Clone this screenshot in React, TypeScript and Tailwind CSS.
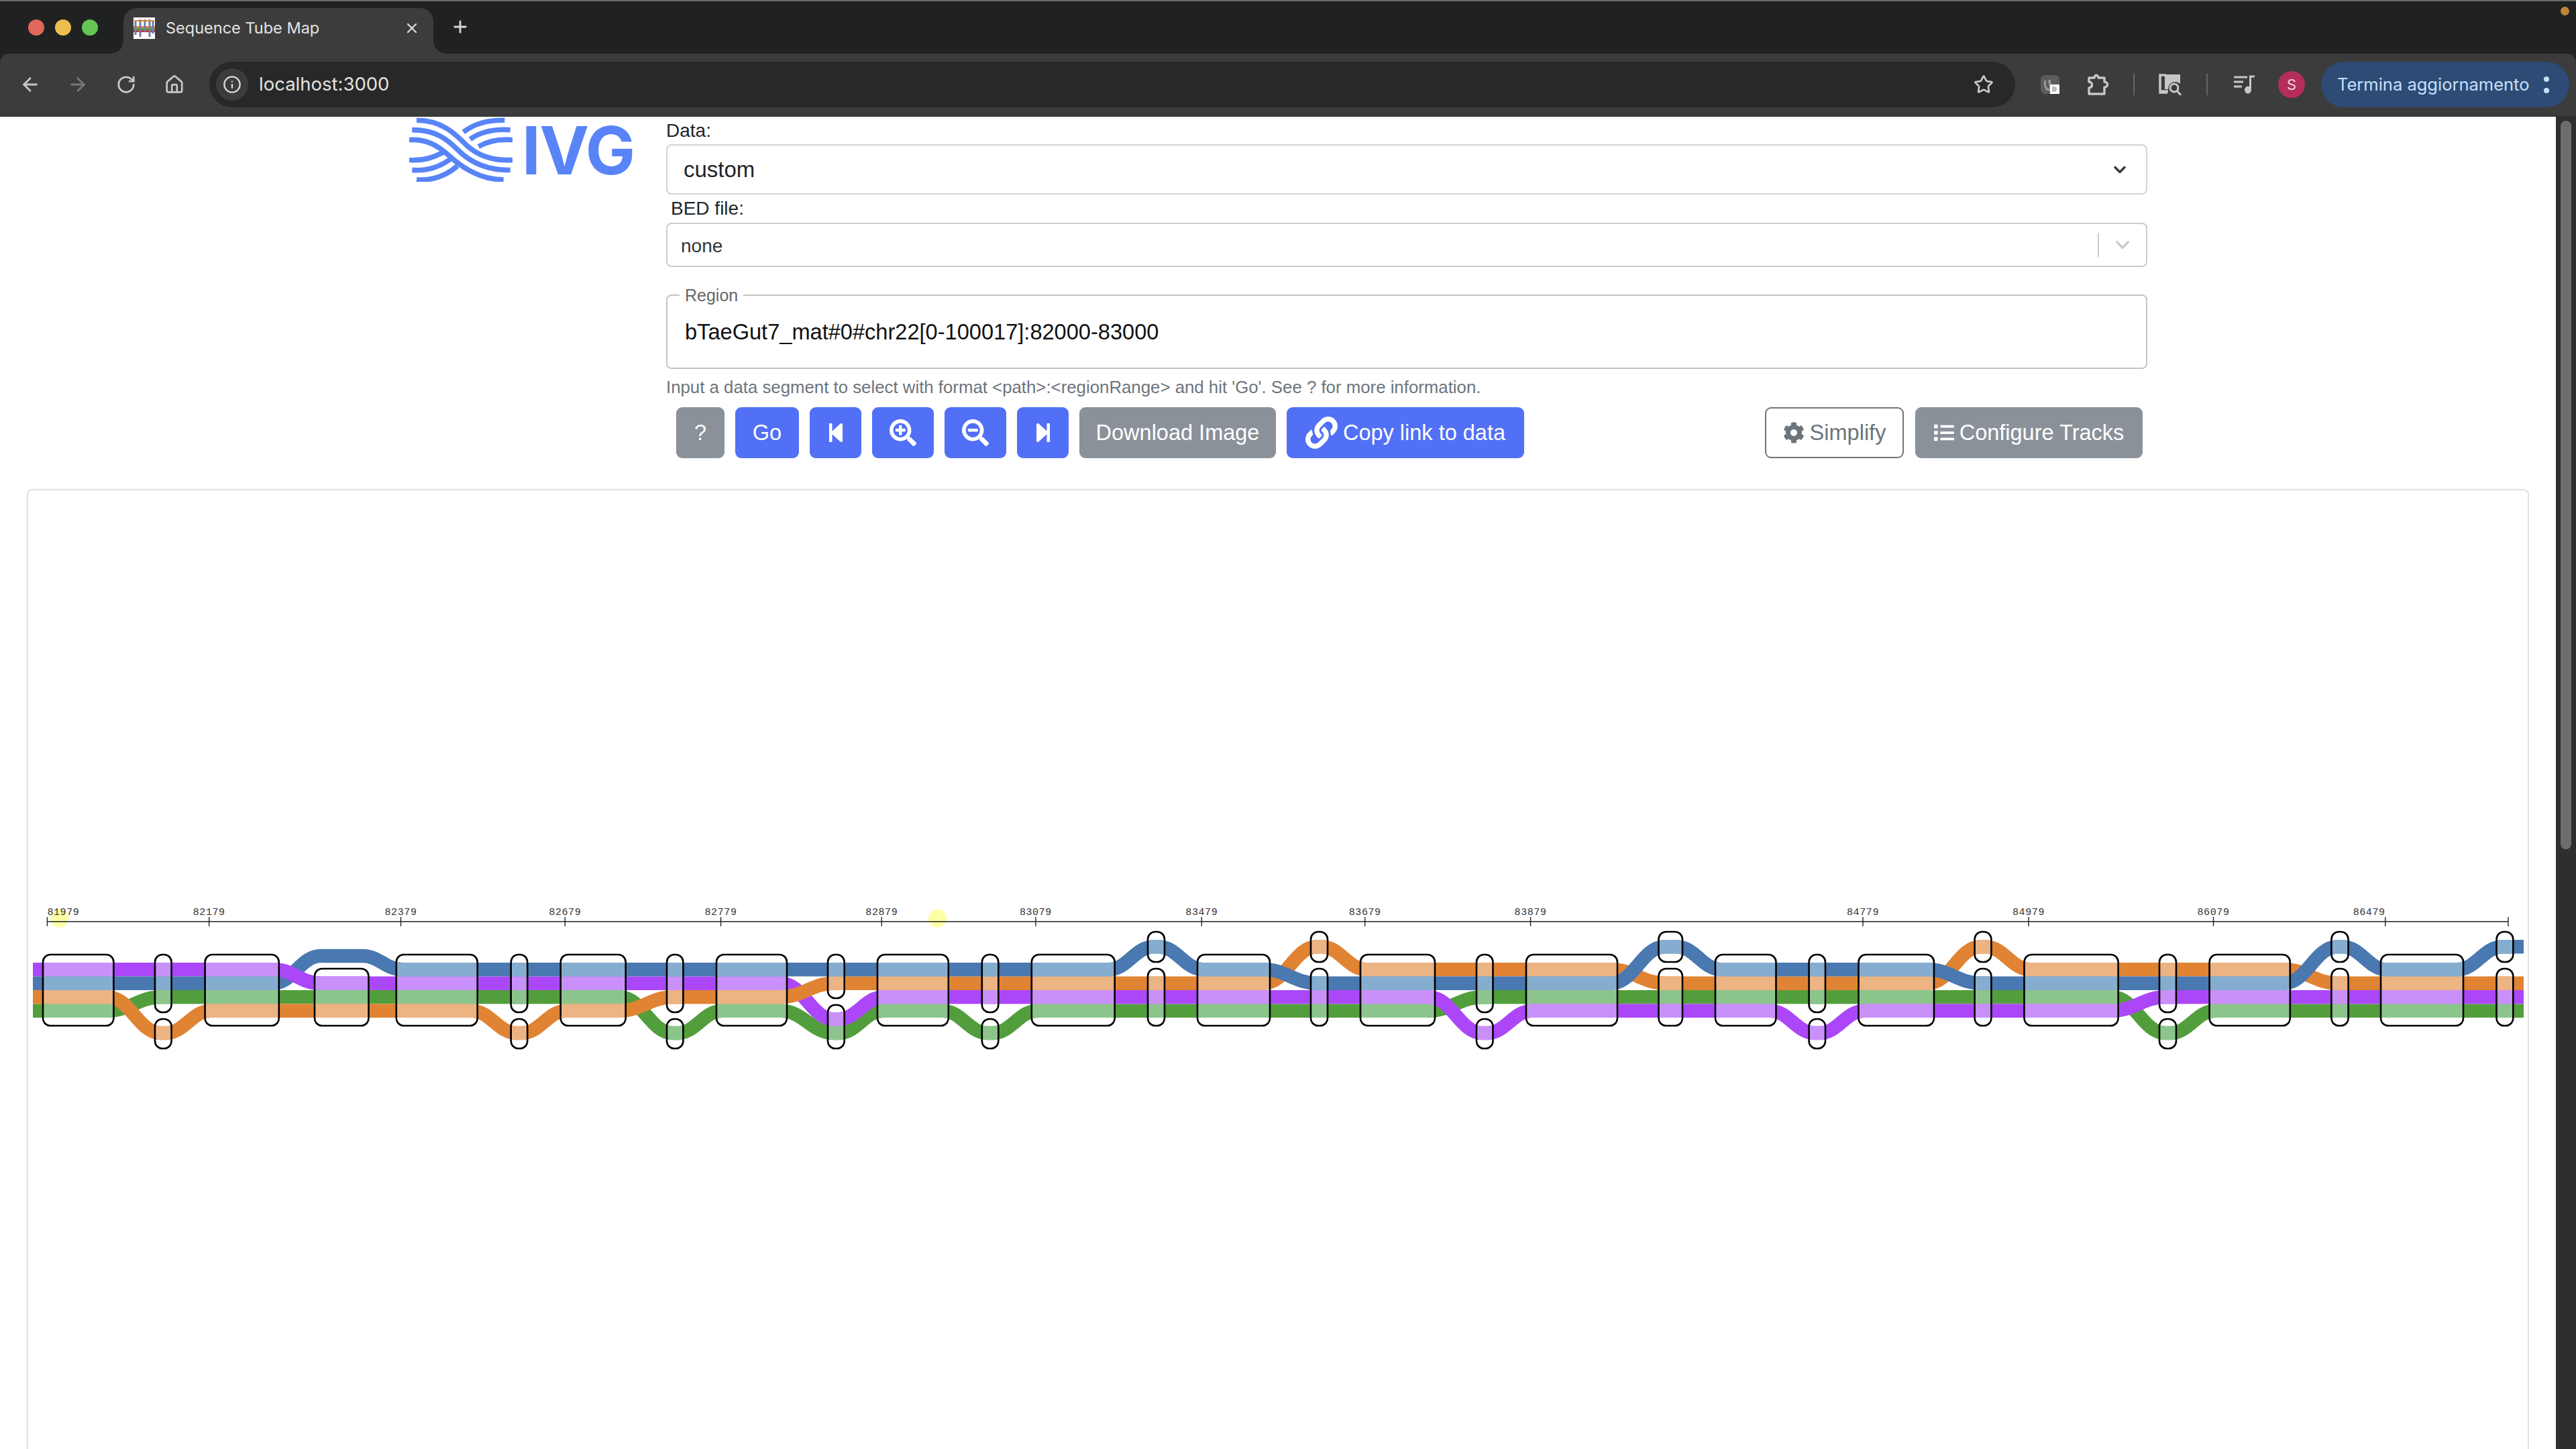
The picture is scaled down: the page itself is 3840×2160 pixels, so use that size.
import { ArrowLeft, ArrowRight, RotateCw, Home, Info, Star, X, Plus, ChevronDown } from "lucide-react";
import { FaStepBackward, FaStepForward, FaSearchPlus, FaSearchMinus, FaLink, FaCog, FaList } from "react-icons/fa";

const COLORS: Record<string, [string, string]> = {
  P: ["#AB47F8", "#C990F9"],
  B: ["#4A78B0", "#85ADD0"],
  O: ["#E08333", "#ECB383"],
  G: ["#539E3C", "#8BC58B"],
};

const LANES: Record<string, number> = { U: 1412.3, A: 1426, "0": 1446.25, "1": 1466.75, "2": 1487.25, "3": 1507.75, E: 1520.3, D: 1541 };

const PARTS: Record<string, [number, number][]> = {
  F: [[1424, 1530]],
  L: [[1445, 1530]],
  M: [[1424, 1510], [1520, 1564]],
  T: [[1390, 1435], [1445, 1530]],
  S: [[1424, 1489], [1499, 1564]],
};

// x range, shape of the node, lanes of purple / blue / orange / green
const NODES: [number, number, string, string][] = [
  [64, 169.4, "F", "0123"],
  [231, 255.6, "M", "01D2"],
  [305.6, 415.8, "F", "0132"],
  [469, 549.5, "L", "1A32"],
  [590.8, 711.7, "F", "1032"],
  [761.7, 786.2, "M", "10D2"],
  [835.7, 932.7, "F", "1032"],
  [994, 1018.4, "M", "102D"],
  [1068, 1173, "F", "1023"],
  [1234, 1258.7, "S", "E01D"],
  [1308, 1413.8, "F", "2013"],
  [1463.8, 1488.3, "M", "201D"],
  [1537.8, 1661.7, "F", "2013"],
  [1711, 1736, "T", "2U13"],
  [1785, 1893, "F", "2013"],
  [1954, 1979, "T", "21U3"],
  [2028, 2139, "F", "2103"],
  [2201, 2225.5, "M", "D102"],
  [2275, 2411, "F", "3102"],
  [2472.5, 2508, "T", "3U12"],
  [2557, 2647.5, "F", "3012"],
  [2696.6, 2721, "M", "D012"],
  [2770.5, 2883, "F", "3012"],
  [2943.6, 2968.4, "T", "31U2"],
  [3017.5, 3157.6, "F", "3102"],
  [3219, 3244, "M", "210D"],
  [3293.6, 3413.8, "F", "2103"],
  [3475.4, 3500.6, "T", "2U13"],
  [3549, 3672, "F", "2013"],
  [3721.5, 3746.3, "T", "2U13"],
];

const TICKS: [number, string, "start" | "middle" | "end"][] = [
  [70.4, "81979", "start"],
  [311.7, "82179", "middle"],
  [597.5, "82379", "middle"],
  [842.3, "82679", "middle"],
  [1074.5, "82779", "middle"],
  [1314.3, "82879", "middle"],
  [1543.9, "83079", "middle"],
  [1791.3, "83479", "middle"],
  [2034.7, "83679", "middle"],
  [2281.6, "83879", "middle"],
  [2777, "84779", "middle"],
  [3024, "84979", "middle"],
  [3299.5, "86079", "middle"],
  [3555.7, "86479", "end"],
  [3739, "", "middle"],
];

// curves start a little inside the nodes, that's how the real tubes bend
const BEND = 9;

function trackPath(index: number) {
  const laneY = (n: number) => LANES[NODES[n][3][index]];
  let d = `M49 ${laneY(0)} L${NODES[0][1] - BEND} ${laneY(0)}`;
  for (let i = 1; i < NODES.length; i++) {
    const x0 = NODES[i - 1][1] - BEND;
    const x1 = NODES[i][0] + BEND;
    const dx = x1 - x0;
    d += ` C${x0 + dx * 0.42} ${laneY(i - 1)} ${x1 - dx * 0.42} ${laneY(i)} ${x1} ${laneY(i)} L${NODES[i][1] - BEND} ${laneY(i)}`;
  }
  return d + ` L3762 ${laneY(NODES.length - 1)}`;
}

const DRAW_ORDER: [string, number][] = [["G", 3], ["P", 0], ["O", 2], ["B", 1]];

function TubeMap() {
  return (
    <svg viewBox="42 1340 3726 240" className="block w-[3726px] h-[240px] mt-[608px]">
      <defs>
        <clipPath id="nodes">
          {NODES.flatMap((n, i) =>
            PARTS[n[2]].map((p, j) => <rect key={`${i}-${j}`} x={n[0]} y={p[0]} width={n[1] - n[0]} height={p[1] - p[0]} rx={11} />)
          )}
        </clipPath>
      </defs>
      <circle cx={88.5} cy={1370} r={13.5} fill="#FDFFA6" />
      <circle cx={1397.5} cy={1370} r={13.5} fill="#FDFFA6" />
      <line x1={70.4} x2={3739} y1={1374.7} y2={1374.7} stroke="#222" strokeWidth={1.6} />
      {TICKS.map(([x, label, anchor]) => (
        <g key={x}>
          <line x1={x} x2={x} y1={1368} y2={1381.7} stroke="#222" strokeWidth={1.4} />
          {label && (
            <text x={x} y={1364.5} textAnchor={anchor} fontFamily="Liberation Mono, monospace" fontSize={15} letterSpacing={0.6} fill="#333">
              {label}
            </text>
          )}
        </g>
      ))}
      {DRAW_ORDER.map(([c, i]) => (
        <path key={c} d={trackPath(i)} fill="none" stroke={COLORS[c][0]} strokeWidth={20.5} />
      ))}
      <path d="M406.8 1446.25 C440 1446.25 445 1466.75 478 1466.75" fill="none" stroke={COLORS.P[0]} strokeWidth={20.5} />
      <g clipPath="url(#nodes)">
        {DRAW_ORDER.map(([c, i]) => (
          <path key={c} d={trackPath(i)} fill="none" stroke={COLORS[c][1]} strokeWidth={20.5} />
        ))}
      </g>
      {NODES.flatMap((n, i) =>
        PARTS[n[2]].map((p, j) => (
          <rect key={`${i}-${j}`} x={n[0]} y={p[0]} width={n[1] - n[0]} height={p[1] - p[0]} rx={11} fill="none" stroke="#000" strokeWidth={2.6} />
        ))
      )}
    </svg>
  );
}

function Logo() {
  const strands = [
    "M125 57 C240 57 300 120 350 170 C400 215 470 240 555 235",
    "M105 100 C210 100 260 140 310 190 C365 245 440 282 545 280",
    "M92 145 C170 140 220 170 270 215 C330 270 410 325 515 323",
    "M335 110 C380 75 440 55 520 57",
    "M365 142 C410 110 470 95 545 100",
    "M403 175 C445 150 490 140 555 145",
    "M92 235 C150 240 200 225 245 200",
    "M105 280 C170 285 230 265 275 232",
    "M125 323 C190 330 260 305 308 262",
  ];
  return (
    <div className="flex items-start w-[383px] h-[100px]">
      <svg viewBox="92 45 463 287" className="w-[154px] h-[96px] mt-[1px]">
        {strands.map((d) => (
          <path key={d} d={d} fill="none" stroke="#5884F8" strokeWidth={23} />
        ))}
      </svg>
      <span className="ml-[14px] text-[99px] leading-[100px] font-bold tracking-[-1.5px] text-[#5884F8] font-['Inter',sans-serif]">IVG</span>
    </div>
  );
}

function Favicon() {
  return (
    <svg viewBox="0 0 32 32" className="w-[32px] h-[32px] bg-white">
      <rect x="0" y="13" width="32" height="3" fill="#e08333" />
      <rect x="0" y="16" width="32" height="3" fill="#539e3c" />
      <rect x="0" y="19" width="32" height="3" fill="#c33" />
      <path d="M3 4v22M10 3v26M17 3v18M24 3v26M29 4v20" stroke="#6c7fb0" strokeWidth="3" />
      <path d="M1 5h30" stroke="#e08333" strokeWidth="2" />
    </svg>
  );
}

function ExtensionIcon() {
  return (
    <div className="relative w-[28px] h-[28px] rounded-[7px] bg-[#5c5c5c]">
      <svg viewBox="0 0 28 28" className="w-[28px] h-[28px]">
        <path d="M7 8c-2 6 1 14 5 14s3-10 0-14M14 7c-2 5 1 13 5 13" fill="none" stroke="#9a9a9a" strokeWidth="3" />
      </svg>
      <div className="absolute right-0 bottom-0 w-[14px] h-[14px] bg-white flex items-center">
        <div className="w-[7px] h-[8px] ml-[3px] rounded-r-[4px] bg-[#bbb]" />
      </div>
    </div>
  );
}

function PuzzleIcon() {
  return (
    <svg viewBox="0 0 34 34" className="w-[34px] h-[34px]">
      <path d="M3 7 H11 C12 2 16 2 17 7 H26 V13 C32 13 32 21 26 21 V31 H3 V22 C9 22 9 13 3 13 Z" fill="none" stroke="#c7c7c7" strokeWidth="3.4" strokeLinejoin="round" />
    </svg>
  );
}

function DeviceSearchIcon() {
  return (
    <svg viewBox="0 0 36 32" className="w-[36px] h-[32px]">
      <path d="M11 2H2v26h11" fill="none" stroke="#c7c7c7" strokeWidth="3.5" />
      <path d="M9 1h23v14c-4-4-11-4-15 0-2 2-3 5-3 8H9z" fill="#c7c7c7" />
      <path d="M2 26h12" stroke="#c7c7c7" strokeWidth="3.5" />
      <circle cx="23" cy="21" r="6" fill="none" stroke="#c7c7c7" strokeWidth="3" />
      <path d="M27 25l6 7" stroke="#c7c7c7" strokeWidth="3" />
    </svg>
  );
}

function MediaIcon() {
  return (
    <svg viewBox="0 0 32 28" className="w-[32px] h-[28px]">
      <path d="M0 3h20M0 10h14M0 17h12" stroke="#c7c7c7" strokeWidth="3" />
      <path d="M23 2h8M24.5 2v19" stroke="#c7c7c7" strokeWidth="3" />
      <ellipse cx="21" cy="22" rx="5" ry="5.5" fill="#c7c7c7" />
    </svg>
  );
}

function BrowserChrome() {
  return (
    <div className="h-[174px] shrink-0 bg-[#202221] border-t-2 border-[#6a6a6a] font-['Inter',sans-serif] relative">
      <div className="h-[78px] flex items-end relative">
        <div className="flex gap-[16px] ml-[42px] mb-[27px] mr-[38px]">
          <div className="w-[24px] h-[24px] rounded-full bg-[#E2665C]" />
          <div className="w-[24px] h-[24px] rounded-full bg-[#EDBE4F]" />
          <div className="w-[24px] h-[24px] rounded-full bg-[#66C653]" />
        </div>
        <div className="relative w-[462px] h-[68px] rounded-t-[20px] bg-[#3c3c3c] flex items-center pl-[15px] pb-[8px]">
          <div className="absolute left-[-18px] bottom-0 w-[18px] h-[18px] bg-[radial-gradient(circle_at_0_0,transparent_17px,#3c3c3c_18px)]" />
          <div className="absolute right-[-18px] bottom-0 w-[18px] h-[18px] bg-[radial-gradient(circle_at_100%_0,transparent_17px,#3c3c3c_18px)]" />
          <Favicon />
          <span className="ml-[16px] w-[355px] text-[23.5px] text-[#e3e3e3] whitespace-nowrap">Sequence Tube Map</span>
          <X size={24} color="#d8d8d8" strokeWidth={2.4} />
        </div>
        <Plus size={28} color="#d8d8d8" strokeWidth={2.4} className="ml-[26px] mb-[26px]" />
        <div className="absolute right-[10px] top-[8px] w-[13px] h-[13px] rounded-full bg-[#C0853A]" />
      </div>
      <div className="h-[94px] bg-[#3c3c3c] rounded-t-[14px] border-b-2 border-[#343434] flex items-center">
        <ArrowLeft size={32} color="#c7c7c7" strokeWidth={2.2} className="ml-[29px]" />
        <ArrowRight size={32} color="#777" strokeWidth={2.2} className="ml-[39px]" />
        <RotateCw size={30} color="#c7c7c7" strokeWidth={2.2} className="ml-[41px]" />
        <Home size={30} color="#c7c7c7" strokeWidth={2.2} className="ml-[42px]" />
        <div className="ml-[37px] w-[2692px] h-[68px] rounded-full bg-[#282828] flex items-center pl-[10px]">
          <div className="w-[48px] h-[48px] rounded-full bg-[#3c3c3c] flex items-center justify-center">
            <Info size={28} color="#d8d8d8" strokeWidth={2} />
          </div>
          <span className="ml-[16px] flex-1 text-[27.5px] text-[#e3e3e3]">localhost:3000</span>
          <Star size={30} color="#c7c7c7" strokeWidth={2.2} className="mr-[32px]" />
        </div>
        <div className="ml-[38px]"><ExtensionIcon /></div>
        <div className="ml-[41px]"><PuzzleIcon /></div>
        <div className="ml-[35px] w-[2px] h-[32px] bg-[#666]" />
        <div className="ml-[36px]"><DeviceSearchIcon /></div>
        <div className="ml-[35px] w-[2px] h-[32px] bg-[#666]" />
        <div className="ml-[39px]"><MediaIcon /></div>
        <div className="ml-[34px] w-[40px] h-[40px] rounded-full bg-[#B42D5D] flex items-center justify-center text-[22px] text-[#f5d5df]">S</div>
        <div className="ml-[24px] w-[370px] h-[68px] rounded-full bg-[#2D4B75] flex items-center pl-[24px] text-[25.5px] text-[#C6E0FA]">
          <span className="w-[308px] whitespace-nowrap">Termina aggiornamento</span>
          <div className="flex flex-col gap-[9px]">
            <div className="w-[8px] h-[8px] rounded-full bg-[#C6E0FA]" />
            <div className="w-[8px] h-[8px] rounded-full bg-[#C6E0FA]" />
          </div>
        </div>
      </div>
    </div>
  );
}

function Btn({ w, color = "bg-[#5270F5] text-white", children }: { w: string; color?: string; children: React.ReactNode }) {
  return <div className={`${w} ${color} h-[76px] rounded-[9px] flex items-center justify-center text-[32.5px] whitespace-nowrap`}>{children}</div>;
}

function Controls() {
  return (
    <div className="w-[2208px] text-[#212529]">
      <div className="h-[41px] flex items-center text-[28px] pt-[1px]">Data:</div>
      <div className="h-[75px] border-2 border-[#ced4da] rounded-[8px] flex items-center justify-between pl-[24px] pr-[25px] text-[33px]">
        <span>custom</span>
        <ChevronDown size={28} color="#343a40" strokeWidth={3} />
      </div>
      <div className="h-[42px] flex items-center text-[28px] pl-[7px]">BED file:</div>
      <div className="h-[66px] border-2 border-[#ccc] rounded-[8px] flex items-center pl-[20px] text-[28px] text-[#333]">
        <span className="flex-1 pt-[3px]">none</span>
        <div className="w-[2px] h-[36px] bg-[#ccc]" />
        <ChevronDown size={34} color="#ccc" strokeWidth={2.4} className="mx-[18px]" />
      </div>
      <fieldset className="mt-[28px] h-[124px] border-2 border-[#c4c4c4] rounded-[8px] pl-[26px]">
        <legend className="ml-[-8px] px-[8px] text-[25px] leading-[28px] text-[#666]">Region</legend>
        <div className="text-[32.6px] leading-[36px] mt-[23px] text-[#111]">bTaeGut7_mat#0#chr22[0-100017]:82000-83000</div>
      </fieldset>
      <div className="h-[57px] flex items-center text-[25.8px] text-[#6c757d] pb-[3px] whitespace-nowrap">
        {"Input a data segment to select with format <path>:<regionRange> and hit 'Go'. See ? for more information."}
      </div>
      <div className="flex justify-between pl-[15px] pr-[7px]">
        <div className="flex gap-[16px]">
          <Btn w="w-[72px]" color="bg-[#8A9199] text-white">?</Btn>
          <Btn w="w-[95px]">Go</Btn>
          <Btn w="w-[77px]"><FaStepBackward size={32} /></Btn>
          <Btn w="w-[92px]"><FaSearchPlus size={40} /></Btn>
          <Btn w="w-[92px]"><FaSearchMinus size={40} /></Btn>
          <Btn w="w-[77px]"><FaStepForward size={32} /></Btn>
          <Btn w="w-[293px]" color="bg-[#8A9199] text-white">Download Image</Btn>
          <Btn w="w-[354px]"><FaLink size={48} className="mr-[8px]" />Copy link to data</Btn>
        </div>
        <div className="flex gap-[17px]">
          <Btn w="w-[207px]" color="bg-white border-2 border-[#6c757d] text-[#6c757d]"><FaCog size={32} className="mr-[8px]" />Simplify</Btn>
          <Btn w="w-[339px]" color="bg-[#8A9199] text-white"><FaList size={30} className="mr-[8px]" />Configure Tracks</Btn>
        </div>
      </div>
    </div>
  );
}

export default function App() {
  return (
    <div className="w-[3840px] h-[2160px] overflow-hidden flex flex-col bg-white font-['Liberation_Sans',Arial,sans-serif]">
      <BrowserChrome />
      <div className="flex flex-1 min-h-0">
        <div className="flex-1 min-w-0">
          <div className="flex pl-[610px]">
            <Logo />
            <Controls />
          </div>
          <div className="ml-[40px] mr-[40px] mt-[46px] h-[1500px] border-2 border-[#dee2e6] rounded-[8px]">
            <TubeMap />
          </div>
        </div>
        <div className="w-[30px] bg-[#2e2e2e] flex justify-center pt-[6px]">
          <div className="w-[16px] h-[1086px] rounded-full bg-[#6d6d6d]" />
        </div>
      </div>
    </div>
  );
}
